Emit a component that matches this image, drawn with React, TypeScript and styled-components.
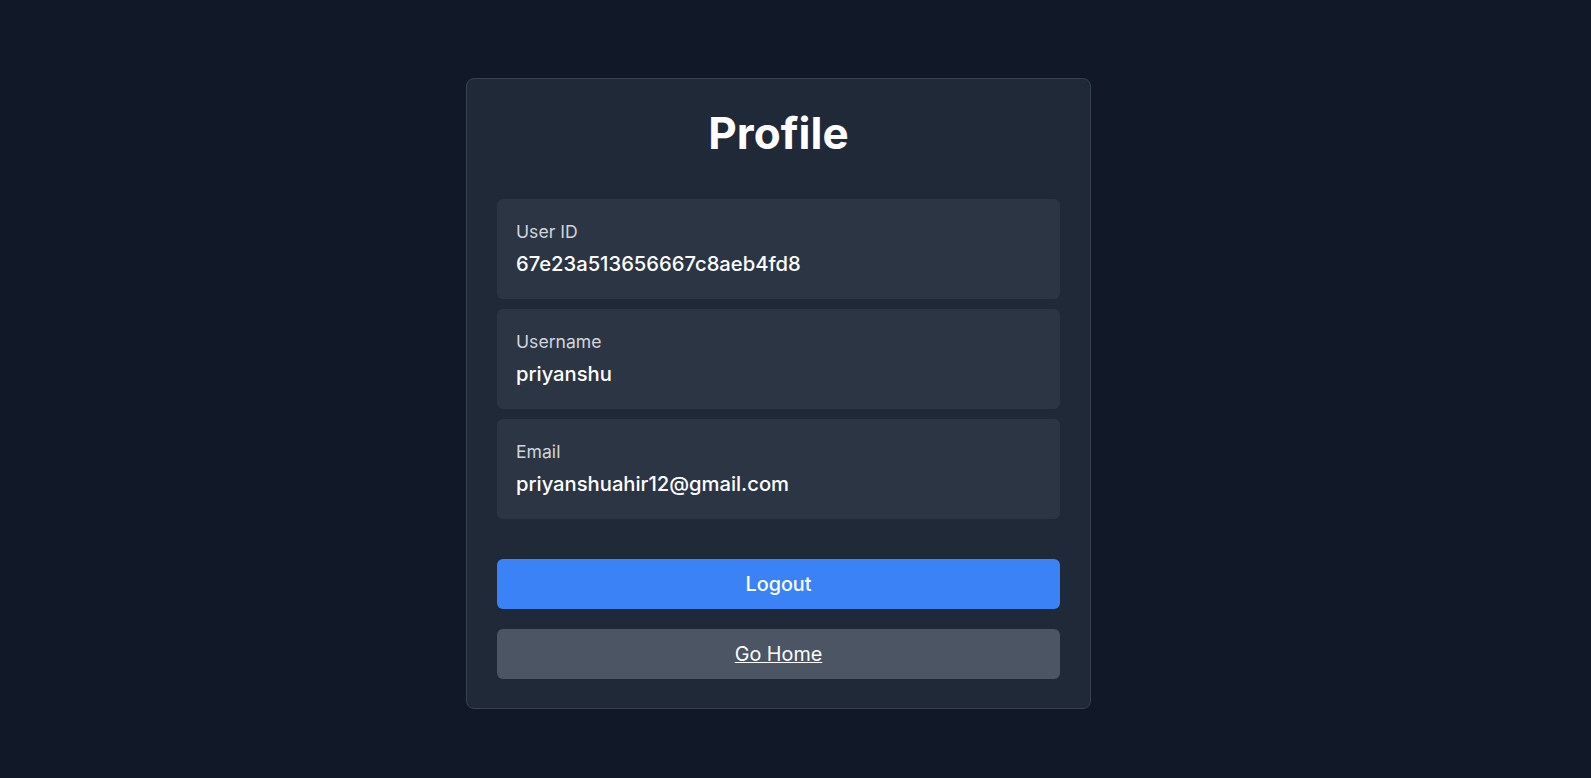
import styled, { createGlobalStyle } from "styled-components";

const GlobalStyle = createGlobalStyle`
  html, body {
    margin: 0;
    padding: 0;
    background-color: #111827;
  }
  body {
    font-family: Inter, "Noto Sans", sans-serif;
    color: #ffffff;
  }
`;

const fields = [
  { label: "User ID", value: "67e23a513656667c8aeb4fd8" },
  { label: "Username", value: "priyanshu" },
  { label: "Email", value: "priyanshuahir12@gmail.com" },
];

export default function App() {
  return (
    <>
      <GlobalStyle />
      <Page>
        <Card>
          <Title>Profile</Title>
          <FieldList>
            {fields.map((field) => (
              <Field key={field.label}>
                <Label>{field.label}</Label>
                <Value>{field.value}</Value>
              </Field>
            ))}
          </FieldList>
          <Actions>
            <Button $variant="primary">Logout</Button>
            <Button $variant="secondary" $underline>
              Go Home
            </Button>
          </Actions>
        </Card>
      </Page>
    </>
  );
}

const Page = styled.div`
  min-height: 778px;
  box-sizing: border-box;
  display: flex;
  justify-content: center;
  align-items: flex-start;
  padding: 78px 34px 0 0;
`;

const Card = styled.div`
  width: 625px;
  box-sizing: border-box;
  padding: 30px 30px 29px;
  background-color: #1f2937;
  border: 1px solid #374151;
  border-radius: 8px;
  display: flex;
  flex-direction: column;
`;

const Title = styled.h1`
  margin: 4px 0 46px;
  text-align: center;
  font-size: 44px;
  line-height: 40px;
  font-weight: 700;
  color: #ffffff;
`;

const FieldList = styled.div`
  display: flex;
  flex-direction: column;
  gap: 10px;
`;

const Field = styled.div`
  box-sizing: border-box;
  height: 100px;
  padding: 20px 19px 20px;
  background-color: #2c3544;
  border-radius: 6px;
  display: flex;
  flex-direction: column;
`;

const Label = styled.span`
  font-size: 17.6px;
  line-height: 26px;
  color: #d1d5db;
`;

const Value = styled.span`
  margin-top: 4px;
  font-size: 20.2px;
  line-height: 30px;
  font-weight: 500;
  color: #ffffff;
`;

const Actions = styled.div`
  margin-top: 40px;
  display: flex;
  flex-direction: column;
  gap: 20px;
`;

const Button = styled.button<{ $variant: "primary" | "secondary"; $underline?: boolean }>`
  height: 50px;
  width: 100%;
  border: none;
  border-radius: 6px;
  font-family: Inter, "Noto Sans", sans-serif;
  font-size: 19.8px;
  font-weight: ${(p) => (p.$variant === "primary" ? 500 : 400)};
  color: #ffffff;
  text-decoration: ${(p) => (p.$underline ? "underline" : "none")};
  background-color: ${(p) => (p.$variant === "primary" ? "#3b82f6" : "#4b5563")};
  cursor: pointer;
`;
